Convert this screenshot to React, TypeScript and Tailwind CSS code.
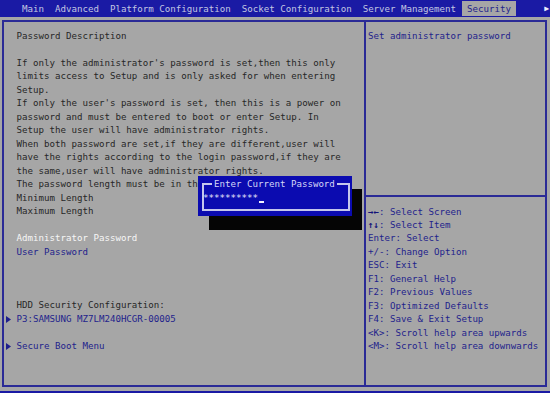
type Tone = "dark" | "white" | "blue";

interface Line {
  text: string;
  tone?: Tone;
  arrow?: boolean;
}

const toneClass: Record<Tone, string> = {
  dark: "text-[#262626]",
  white: "text-[#f6f6f6]",
  blue: "text-[#1f1f8c]",
};

const tabs = [
  "Main",
  "Advanced",
  "Platform Configuration",
  "Socket Configuration",
  "Server Management",
  "Security",
];

// the rest of row 12 sits under the popup, so only the visible part is kept
const leftLines: Line[] = [
  { text: "Password Description" },
  { text: "" },
  { text: "If only the administrator's password is set,then this only" },
  { text: "limits access to Setup and is only asked for when entering" },
  { text: "Setup." },
  { text: "If only the user's password is set, then this is a power on" },
  { text: "password and must be entered to boot or enter Setup. In" },
  { text: "Setup the user will have administrator rights." },
  { text: "When both password are set,if they are different,user will" },
  { text: "have the rights according to the login password,if they are" },
  { text: "the same,user will have administrator rights." },
  { text: "The password length must be in th" },
  { text: "Minimum Length" },
  { text: "Maximum Length" },
  { text: "" },
  { text: "Administrator Password", tone: "white" },
  { text: "User Password", tone: "blue" },
  { text: "" },
  { text: "" },
  { text: "" },
  { text: "HDD Security Configuration:" },
  { text: "P3:SAMSUNG MZ7LM240HCGR-00005", tone: "blue", arrow: true },
  { text: "" },
  { text: "Secure Boot Menu", tone: "blue", arrow: true },
];

const keyHelp: [string, string][] = [
  ["→←", ": Select Screen"],
  ["↑↓", ": Select Item"],
  ["", "Enter: Select"],
  ["", "+/-: Change Option"],
  ["", "ESC: Exit"],
  ["", "F1: General Help"],
  ["", "F2: Previous Values"],
  ["", "F3: Optimized Defaults"],
  ["", "F4: Save & Exit Setup"],
  ["", "<K>: Scroll help area upwards"],
  ["", "<M>: Scroll help area downwards"],
];

function Triangle() {
  return (
    <svg width="5" height="7" viewBox="0 0 5 7" className="ml-[2px]">
      <polygon points="0,0 5,3.5 0,7" fill="#1f1f8c" />
    </svg>
  );
}

function PasswordPrompt() {
  return (
    <>
      {/* drop shadow */}
      <div className="absolute left-[209px] top-[189px] w-[153px] h-[41px] bg-[#050505]" />
      <div className="absolute left-[198px] top-[176px] w-[154px] h-[40px] bg-[#0b0bb0]">
        <div className="absolute left-[4px] top-[7px] w-[148px] h-[28px] border-2 border-[#c4c6ec]" />
        <span className="absolute left-[14px] top-[2px] px-[2px] bg-[#0b0bb0] whitespace-pre text-[#d4d6f6]">
          Enter Current Password
        </span>
        <span className="absolute left-[5px] top-[16px] whitespace-pre text-[#e4e6fa]">
          **********
        </span>
        <div className="absolute left-[61px] top-[25px] w-[5px] h-[2px] bg-[#f2f2ff]" />
      </div>
    </>
  );
}

export default function App() {
  return (
    <div className="relative w-[550px] h-[393px] overflow-hidden bg-[#a6a6a6] font-['DejaVu_Sans_Mono',monospace] text-[9.13px] leading-[13.48px]">
      {/* menu bar */}
      <div className="relative flex items-start h-[17px] pt-[1px] pl-[16.5px] bg-[#1a1aa4]">
        {tabs.map((t) => (
          <span
            key={t}
            className={
              t === "Security"
                ? "h-[15px] leading-[16px] whitespace-pre bg-[#a6a6a6] text-[#1f1f8c]"
                : "h-[15px] leading-[16px] whitespace-pre text-[#c2c6e2]"
            }
          >
            {" " + t + " "}
          </span>
        ))}
        {/* more-tabs indicator */}
        <span className="absolute right-[1px] top-[1px] text-[8px] leading-[15px] text-[#eceeff]">▶</span>
      </div>

      {/* frame */}
      <div className="flex ml-[2px] mt-[3px] w-[545px] h-[367px] border-2 border-[#2a2a96]">
        <div className="w-[360px] pt-[8px]">
          {leftLines.map((l, i) => (
            <div key={i} className="flex items-center h-[13.48px]">
              <div className="w-[12.5px] flex items-center">{l.arrow && <Triangle />}</div>
              <span className={"whitespace-pre " + toneClass[l.tone ?? "dark"]}>{l.text}</span>
            </div>
          ))}
        </div>

        <div className="flex-1 flex flex-col border-l-2 border-[#2a2a96]">
          <div className="h-[175px] pt-[8px] pl-[2px] border-b-2 border-[#2a2a96] text-[#1f1f8c] whitespace-pre">
            Set administrator password
          </div>
          <div className="pt-[8.5px] pl-[2px] text-[#1f1f8c]">
            {keyHelp.map(([k, v], i) => (
              <div key={i} className="h-[13.48px] whitespace-pre">
                {k && <span className="font-bold text-[#12127a]">{k}</span>}
                {v}
              </div>
            ))}
          </div>
        </div>
      </div>

      {/* bottom status bar (cut off) */}
      <div className="mt-[4px] h-[2px] bg-[#1a1aa4]" />

      <PasswordPrompt />
    </div>
  );
}
